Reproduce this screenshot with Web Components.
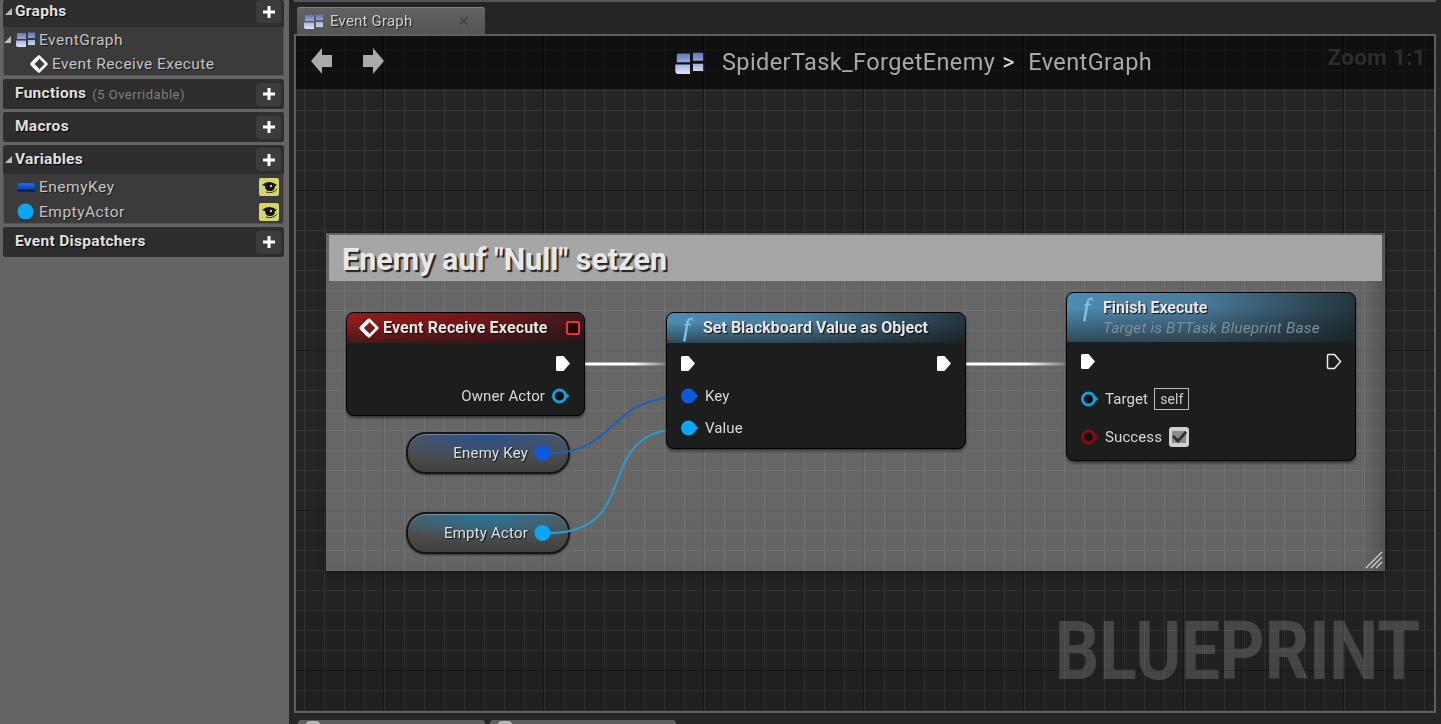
<!DOCTYPE html>
<html>
<head>
<meta charset="utf-8">
<title>Event Graph</title>
<style>
  html, body { margin: 0; height: 724px; overflow: hidden; background: #252525; }
  body { font-family: Roboto, "Liberation Sans", sans-serif; }
</style>
</head>
<body>

<ue-editor>
  <ue-sidebar slot="side">
    <ue-section title="Graphs" arrow style="--head: 27px; --pb: 4px">
      <ue-tree-row icon="graph" arrow>EventGraph</ue-tree-row>
      <ue-tree-row icon="event" indent style="height:24px;letter-spacing:.42px">Event Receive Execute</ue-tree-row>
    </ue-section>
    <ue-section title="Functions" note="(5 Overridable)"></ue-section>
    <ue-section title="Macros"></ue-section>
    <ue-section title="Variables" arrow style="--head: 29px">
      <ue-tree-row icon="key" eye>EnemyKey</ue-tree-row>
      <ue-tree-row icon="actor" eye>EmptyActor</ue-tree-row>
    </ue-section>
    <ue-section title="Event Dispatchers"></ue-section>
  </ue-sidebar>

  <ue-tab slot="tabs">Event Graph</ue-tab>

  <ue-graph slot="graph">
    <ue-comment style="left:30px;top:197px;width:1059px;height:338px">Enemy auf "Null" setzen</ue-comment>

    <ue-var-node color="#0b5ad9" style="left:110px;top:396px">Enemy Key</ue-var-node>
    <ue-var-node color="#0aa5f5" style="left:110px;top:476px">Empty Actor</ue-var-node>

    <ue-wires></ue-wires>

    <ue-node kind="event" title="Event Receive Execute" style="left:50px;top:276px;width:239px;height:104px;--title-ls:.15px">
      <ue-row><span></span><ue-pin type="exec"></ue-pin></ue-row>
      <ue-row><span></span><ue-pin type="hollow" color="#1a9ad6" side="out">Owner Actor</ue-pin></ue-row>
    </ue-node>

    <ue-node kind="func" title="Set Blackboard Value as Object" style="left:370px;top:276px;width:300px;height:137px">
      <ue-row><ue-pin type="exec"></ue-pin><ue-pin type="exec"></ue-pin></ue-row>
      <ue-row><ue-pin type="data" color="#0b5ad9">Key</ue-pin></ue-row>
      <ue-row><ue-pin type="data" color="#0aa5f5">Value</ue-pin></ue-row>
    </ue-node>

    <ue-node kind="func" title="Finish Execute" sub="Target is BTTask Blueprint Base" style="left:770px;top:256px;width:290px;height:169px">
      <ue-row><ue-pin type="exec"></ue-pin><ue-pin type="exec-open"></ue-pin></ue-row>
      <ue-row><ue-pin type="hollow" color="#1a9ad6">Target<ue-self>self</ue-self></ue-pin></ue-row>
      <ue-row><ue-pin type="hollow" color="#8c0a14">Success<ue-check></ue-check></ue-pin></ue-row>
    </ue-node>
  </ue-graph>

  <ue-bottom-tabs slot="bottom"></ue-bottom-tabs>
</ue-editor>

<script>
(function () {

  const GRAPH_ICON = (w, h) => `
    <svg width="${w}" height="${h}" viewBox="0 0 20 15" style="display:block">
      <defs><linearGradient id="g" x1="0" y1="0" x2="0" y2="1">
        <stop offset="0" stop-color="#5f75b4"/><stop offset="1" stop-color="#dfe7fb"/>
      </linearGradient></defs>
      <path fill="url(#g)" d="M1 2 Q1 1 2 1 H10 V7 H1 Z M12 0.5 H19 V6 H12 Z M0 8.5 H10 V15 H2 Q0 15 0 13 Z M12 8 H19 V13 H12 Z"/>
    </svg>`;

  const DIAMOND = (s) => `
    <svg width="${s}" height="${s}" viewBox="0 0 20 20" style="display:block">
      <path d="M10 2.5 L17.5 10 L10 17.5 L2.5 10 Z" fill="none" stroke="#eee" stroke-width="2.6" stroke-linejoin="round"/>
      <path d="M3 10 L9 4 M3 10 L9 16" stroke="#fff" stroke-width="3.4"/>
    </svg>`;

  class UeEditor extends HTMLElement {
    connectedCallback() {
      this.attachShadow({ mode: 'open' }).innerHTML = `
        <style>
          /* the reference is a slightly soft upscale */
          :host { display: grid; grid-template-columns: 289px 1fr; height: 724px; overflow: hidden; filter: blur(.5px); }
          .main { display: flex; flex-direction: column; min-width: 0; height: 724px; overflow: hidden; padding: 0 5px 0 5px; }
          .tabs { flex: none; height: 34px; box-sizing: border-box; border-top: 2px solid #555; display: flex; align-items: flex-end; padding-left: 3px; }
        </style>
        <slot name="side"></slot>
        <div class="main">
          <div class="tabs"><slot name="tabs"></slot></div>
          <slot name="graph"></slot>
          <slot name="bottom"></slot>
        </div>`;
    }
  }

  class UeSidebar extends HTMLElement {
    connectedCallback() {
      this.attachShadow({ mode: 'open' }).innerHTML = `
        <style>
          :host { display: flex; flex-direction: column; gap: 3px; background: #646464; padding: 0 5px 0 3px; height: 724px; box-sizing: border-box; }
        </style>
        <slot></slot>`;
    }
  }

  class UeSection extends HTMLElement {
    connectedCallback() {
      const title = this.getAttribute('title');
      const note = this.getAttribute('note');
      const arrow = this.hasAttribute('arrow');
      this.attachShadow({ mode: 'open' }).innerHTML = `
        <style>
          :host { display: block; flex: none; color: #dcdcdc; border-radius: 3px; overflow: hidden; background: #3b3b3b; box-shadow: 0 0 0 1px #555 inset; }
          .head { height: var(--head, 30px); background: #2e2e2e; display: flex; align-items: center; box-sizing: border-box; padding: 0 3px var(--pb, 0) 1px; }
          .tri { width: 11px; flex: none; }
          .tri svg { display: block; }
          b { font-size: 15.5px; font-weight: 700; letter-spacing: .3px; color: #e0e0e0; text-shadow: 1px 1px 1px #000; transform: translateY(-1px); }
          small { font-size: 13px; color: #808080; margin-left: 6px; letter-spacing: .5px; margin-top: 1px; }
          .plus { margin-left: auto; width: 25px; height: 23px; background: #3c3c3c; border-radius: 3px; display: flex; align-items: center; justify-content: center; }
        </style>
        <div class="head">
          <span class="tri">${arrow ? '<svg width="9" height="9"><path d="M8 1 V8 H1 Z" fill="#bbb"/></svg>' : ''}</span>
          <b>${title}</b>${note ? `<small>${note}</small>` : ''}
          <span class="plus"><svg width="14" height="14"><path d="M7 1 V13 M1 7 H13" stroke="#fff" stroke-width="3"/></svg></span>
        </div>
        ${this.children.length ? '<slot></slot>' : ''}`;
    }
  }

  class UeTreeRow extends HTMLElement {
    connectedCallback() {
      const icon = this.getAttribute('icon');
      const arrow = this.hasAttribute('arrow');
      const eye = this.hasAttribute('eye');
      const isEvent = icon === 'event';
      const icons = {
        graph: GRAPH_ICON(21, 15),
        event: DIAMOND(20),
        key: '<svg width="20" height="12"><rect x="1" y="2" width="18" height="8" rx="3.5" fill="#0d4fc0"/><rect x="2" y="2" width="16" height="3" rx="1.5" fill="#1c66e0"/><rect x="1" y="8" width="18" height="3" rx="1.5" fill="#0a2460"/></svg>',
        actor: '<svg width="20" height="20"><circle cx="10.5" cy="11" r="8.5" fill="#0b3a58"/><circle cx="9.5" cy="9.5" r="8" fill="#0da6f0"/></svg>'
      };
      this.attachShadow({ mode: 'open' }).innerHTML = `
        <style>
          :host { display: flex; align-items: center; height: 25px; font-size: 15.5px; color: #c4c4c4; letter-spacing: .5px; text-shadow: 1px 1px 0 #1a1a1a; padding-left: ${this.hasAttribute('indent') ? 25 : 1}px; }
          .tri { width: 12px; flex: none; display: ${this.hasAttribute('indent') ? 'none' : 'block'}; }
          .tri svg { display: block; }
          .icon { flex: none; margin-right: ${isEvent ? 2 : 3}px; width: ${isEvent ? 22 : 20}px; display: flex; align-items: center; justify-content: center; }
          .eye { margin: 0 5px 0 auto; width: 20px; height: 18px; background: #d5d56c; border-radius: 2px; display: flex; align-items: center; justify-content: center; }
        </style>
        <span class="tri">${arrow ? '<svg width="9" height="9"><path d="M7 1 V8 H0 Z" fill="#bbb"/></svg>' : ''}</span>
        <span class="icon">${icons[icon]}</span>
        <slot></slot>
        ${eye ? `<span class="eye"><svg width="17" height="12" viewBox="0 0 17 12"><path d="M1 4 Q8 -2 16 4 L14 5 Q14 10 9 10 Q4 10 4 5 Z" fill="#111"/><path d="M5 11 Q12 13 16 8" stroke="#333" fill="none"/><circle cx="10" cy="5" r="1.2" fill="#d5d56c"/></svg></span>` : ''}`;
    }
  }

  class UeTab extends HTMLElement {
    connectedCallback() {
      this.attachShadow({ mode: 'open' }).innerHTML = `
        <style>
          :host { display: flex; align-items: center; width: 188px; height: 27px; box-sizing: border-box; background: linear-gradient(#626262, #555); border-top: 1px solid #8f8a3c; border-radius: 3px 3px 0 0; padding: 0 8px 0 7px; color: #d0d0d0; font-size: 15px; letter-spacing: .2px; text-shadow: 1px 1px 1px #111; }
          .icon { margin-right: 6px; }
          .x { margin-left: auto; margin-right: 7px; color: #3f3f3f; font-size: 14px; text-shadow: none; }
        </style>
        <span class="icon">${GRAPH_ICON(20, 15)}</span><slot></slot><span class="x">&#x2715;</span>`;
    }
  }

  class UeGraph extends HTMLElement {
    connectedCallback() {
      this.attachShadow({ mode: 'open' }).innerHTML = `
        <style>
          :host { display: block; position: relative; flex: none; height: 679px; box-sizing: border-box; border: 2px solid #5f5f5f; overflow: hidden;
            background-color: #252525;
            background-image:
              linear-gradient(90deg, #191919 1px, transparent 1px),
              linear-gradient(#191919 1px, transparent 1px),
              linear-gradient(90deg, #363636 1px, transparent 1px),
              linear-gradient(#343434 1px, transparent 1px);
            background-size: 160px 160px, 160px 160px, 20px 20px, 20px 20px;
            background-position: 87px 0, 0 154px, 8px 0, 0 14px;
          }
          .bar { position: absolute; left: 0; right: 0; top: 0; height: 53px; background: rgba(0,0,0,.58); display: flex; align-items: center; z-index: 5; }
          .arrows { position: absolute; left: 15px; top: 10px; display: flex; gap: 29px; }
          .crumb { position: absolute; left: 379px; top: 0; height: 51px; display: flex; align-items: center; font-size: 23.5px; color: #a9a9a9; letter-spacing: .4px; }
          .crumb .i { margin-right: 17px; margin-top: 2px; }
          .crumb .sep { width: 33px; box-sizing: border-box; padding-left: 7px; }
          .zoom { position: absolute; right: 8px; top: 8px; font-size: 22.5px; font-weight: 700; color: #2d2d2d; letter-spacing: .3px; }
          .mark { position: absolute; right: 14px; bottom: 19px; font-size: 81px; line-height: 81px; font-weight: 700; color: rgba(255,255,255,.17); transform: scaleX(.855); transform-origin: right center; z-index: 0; }
          .fade { position: absolute; inset: 0; background: linear-gradient(transparent 60%, rgba(0,0,0,.15)); pointer-events: none; }
        </style>
        <div class="fade"></div>
        <div class="mark">BLUEPRINT</div>
        <slot></slot>
        <div class="bar">
          <div class="arrows">
            <svg width="22" height="30" viewBox="0 0 22 30"><path d="M0 15 L11 2 V9 H21 V21 H11 V28 Z" fill="#aaa"/></svg>
            <svg width="22" height="30" viewBox="0 0 22 30"><path d="M22 15 L11 2 V9 H1 V21 H11 V28 Z" fill="#aaa"/></svg>
          </div>
          <div class="crumb">
            <span class="i">${GRAPH_ICON(30, 22)}</span>
            <span>SpiderTask_ForgetEnemy</span>
            <span class="sep" style="color:#ddd">&gt;</span>
            <span>EventGraph</span>
          </div>
          <div class="zoom">Zoom 1:1</div>
        </div>`;
    }
  }

  class UeComment extends HTMLElement {
    connectedCallback() {
      this.attachShadow({ mode: 'open' }).innerHTML = `
        <style>
          :host { display: block; position: absolute; box-sizing: border-box; padding: 2px 3px 3px; background: rgba(255,255,255,.3); box-shadow: 0 1px 6px rgba(0,0,0,.5), inset -18px -4px 18px -10px rgba(0,0,0,.22); }
          .title { height: 46px; margin-right: 0; background: #a6a6a6; display: flex; align-items: center; padding: 2px 0 0 13px; box-sizing: border-box; font-size: 30.5px; font-weight: 700; color: #e8e8e8; text-shadow: 2px 2px 1px #222; }
          svg { position: absolute; right: 2px; bottom: 2px; }
        </style>
        <div class="title"><slot></slot></div>
        <svg width="18" height="18"><path d="M1 17 L17 1 M6 17 L17 6 M11 17 L17 11" stroke="#ccc" stroke-width="1.4"/></svg>`;
    }
  }

  class UeWires extends HTMLElement {
    connectedCallback() {
      this.attachShadow({ mode: 'open' }).innerHTML = `
        <style>
          :host { display: block; position: absolute; inset: 0; pointer-events: none; }
          svg { position: absolute; left: 0; top: 0; }
        </style>
        <svg width="1140" height="680" fill="none">
          <defs>
            <linearGradient id="w1" gradientUnits="userSpaceOnUse" x1="285" y1="0" x2="372" y2="0"><stop offset=".6" stop-color="#fff"/><stop offset="1" stop-color="#777"/></linearGradient>
            <linearGradient id="w2" gradientUnits="userSpaceOnUse" x1="665" y1="0" x2="772" y2="0"><stop offset=".6" stop-color="#fff"/><stop offset="1" stop-color="#777"/></linearGradient>
          </defs>
          <path d="M285 328 H372" stroke="url(#w1)" stroke-width="3"/>
          <path d="M665 328 H772" stroke="url(#w2)" stroke-width="3"/>
          <path d="M253 417 C324 417 309 361 387 361" stroke="#1f60bb" stroke-width="2"/>
          <path d="M253 497 C349 497 294 393 387 393" stroke="#2c9bd0" stroke-width="2"/>
        </svg>`;
    }
  }

  class UeNode extends HTMLElement {
    connectedCallback() {
      const kind = this.getAttribute('kind');
      const title = this.getAttribute('title');
      const sub = this.getAttribute('sub');
      const isEvent = kind === 'event';
      this.attachShadow({ mode: 'open' }).innerHTML = `
        <style>
          :host { display: flex; flex-direction: column; position: absolute; box-sizing: border-box; background: #1c1d1d; border: 1px solid #000; border-radius: 8px; overflow: hidden; box-shadow: 0 2px 3px rgba(0,0,0,.5); color: #dcdcdc; font-size: 15px; z-index: 2; }
          .head { flex: none; position: relative; display: flex; align-items: center; box-sizing: border-box; height: ${sub ? 49 : 30}px; padding: 0 11px ${sub ? 0 : 1}px; }
          .head::after { content: ''; position: absolute; inset: 0; background: linear-gradient(rgba(0,0,0,0) 30%, rgba(20,20,20,.55)); }
          .head.event { background: linear-gradient(90deg, #8e1c1e, #701618 55%, #3a1a1a); }
          .head.func { background: linear-gradient(90deg, #4f8bb0, #4a7c9c 45%, #24343e); }
          .head > * { position: relative; z-index: 1; }
          .ic { width: 22px; flex: none; margin-right: 3px; align-self: ${sub ? 'flex-start' : 'center'}; }
          .f { font-family: "Liberation Serif", serif; font-style: italic; font-weight: 400; font-size: 25px; line-height: 29px; color: #7cc4ee; -webkit-text-stroke: .4px #7cc4ee; padding-left: 5px; display: block; }
          .t b { display: block; font-size: 16px; font-weight: 700; letter-spacing: var(--title-ls, 0); color: #e6e6e6; text-shadow: 1px 1px 1px #111; }
          .t i { display: block; font-size: 15.5px; color: #7d8e96; margin-top: 2px; letter-spacing: .15px; }
          .stop { margin-left: auto; width: 14px; height: 14px; box-sizing: border-box; border: 2px solid #e8323a; border-radius: 2px; background: #200; margin-right: -7px; }
          .body { padding-top: ${sub ? 1 : 4}px; --row: ${sub ? '37.5px' : '32.5px'}; }
        </style>
        <div class="head ${kind}">
          <span class="ic">${isEvent ? DIAMOND(22) : '<span class="f">f</span>'}</span>
          <span class="t"><b>${title}</b>${sub ? `<i>${sub}</i>` : ''}</span>
          ${isEvent ? '<span class="stop"></span>' : ''}
        </div>
        <div class="body"><slot></slot></div>`;
    }
  }

  class UeRow extends HTMLElement {
    connectedCallback() {
      this.attachShadow({ mode: 'open' }).innerHTML = `
        <style>
          :host { display: flex; align-items: center; justify-content: space-between; height: var(--row, 32px); padding: 0 13px; }
        </style>
        <slot></slot>`;
    }
  }

  class UePin extends HTMLElement {
    connectedCallback() {
      const type = this.getAttribute('type');
      const color = this.getAttribute('color');
      const out = this.getAttribute('side') === 'out';
      let svg = '';
      if (type === 'exec') {
        svg = '<svg width="16" height="17"><path d="M2.5 1 H8.5 L15 8.5 L8.5 16 H2.5 Q1 16 1 14.5 V2.5 Q1 1 2.5 1 Z" fill="#fff"/></svg>';
      } else if (type === 'exec-open') {
        svg = '<svg width="16" height="17"><path d="M2.5 1.5 H8.5 L14.5 8.5 L8.5 15.5 H2.5 Q1.5 15.5 1.5 14.5 V2.5 Q1.5 1.5 2.5 1.5 Z" fill="none" stroke="#eee" stroke-width="1.5"/></svg>';
      } else if (type === 'data') {
        svg = `<svg width="19" height="16"><path d="M15 5 L18.5 8 L15 11 Z" fill="${color}"/><circle cx="8.5" cy="8" r="7.5" fill="${color}"/></svg>`;
      } else {
        svg = `<svg width="19" height="16"><path d="M15 5 L18.5 8 L15 11 Z" fill="${color}"/><circle cx="8.5" cy="8" r="6" fill="#111" stroke="${color}" stroke-width="3"/></svg>`;
      }
      this.attachShadow({ mode: 'open' }).innerHTML = `
        <style>
          :host { display: inline-flex; align-items: center; gap: 6px; color: #d8d8d8; font-size: 15px; letter-spacing: .1px; ${out ? 'margin-right: 1px;' : ''} }
          svg { display: block; flex: none; }
        </style>
        ${out ? '<slot></slot>' + svg : svg + (this.childNodes.length ? '<slot></slot>' : '')}`;
    }
  }

  class UeSelf extends HTMLElement {
    connectedCallback() {
      this.attachShadow({ mode: 'open' }).innerHTML = `
        <style>
          :host { display: block; border: 1px solid #bbb; padding: 1px 5px; font-size: 14px; color: #ccc; line-height: 18px; }
        </style>
        <slot></slot>`;
    }
  }

  class UeCheck extends HTMLElement {
    connectedCallback() {
      this.attachShadow({ mode: 'open' }).innerHTML = `
        <style>
          :host { display: block; margin-left: 1px; width: 20px; height: 20px; background: #cfcfcf; border-radius: 3px; }
          svg { display: block; }
        </style>
        <svg width="20" height="20"><path d="M3 4 H17 V16 H3 Z" fill="#8d8d8d"/><path d="M4 9 L9 14 L17 5" fill="none" stroke="#333" stroke-width="3"/></svg>`;
    }
  }

  class UeVarNode extends HTMLElement {
    connectedCallback() {
      const color = this.getAttribute('color');
      this.attachShadow({ mode: 'open' }).innerHTML = `
        <style>
          :host { display: flex; align-items: center; justify-content: flex-end; gap: 6px; position: absolute; width: 164px; height: 42px; box-sizing: border-box; padding-right: 15px; border: 2px solid #141414; border-radius: 20px; color: #e0e0e0; font-size: 15px; letter-spacing: .2px; text-shadow: 1px 1px 1px #111;
            background: radial-gradient(ellipse 70% 75% at 50% 0, color-mix(in srgb, ${color} 50%, #444), transparent), linear-gradient(#5a5a5a, #404040); box-shadow: 0 1px 2px rgba(0,0,0,.5), inset 0 1px 0 rgba(255,255,255,.3); }
          svg { display: block; }
        </style>
        <slot></slot>
        <svg width="19" height="16"><path d="M15 5 L18.5 8 L15 11 Z" fill="${color}"/><circle cx="8.5" cy="8" r="8" fill="${color}"/></svg>`;
    }
  }

  class UeBottomTabs extends HTMLElement {
    connectedCallback() {
      this.attachShadow({ mode: 'open' }).innerHTML = `
        <style>
          :host { display: flex; gap: 5px; padding: 7px 0 0 4px; height: 12px; }
          span { display: block; position: relative; height: 8px; background: #5f5f5f; border-radius: 3px 3px 0 0; }
          span::after { content: ''; position: absolute; left: 8px; top: 1px; width: 14px; height: 4px; border-radius: 7px 7px 0 0; background: #b8b8b8; }
        </style>
        <span style="width:187px"></span><span style="width:186px"></span>`;
    }
  }

  customElements.define('ue-editor', UeEditor);
  customElements.define('ue-sidebar', UeSidebar);
  customElements.define('ue-section', UeSection);
  customElements.define('ue-tree-row', UeTreeRow);
  customElements.define('ue-tab', UeTab);
  customElements.define('ue-graph', UeGraph);
  customElements.define('ue-comment', UeComment);
  customElements.define('ue-wires', UeWires);
  customElements.define('ue-node', UeNode);
  customElements.define('ue-row', UeRow);
  customElements.define('ue-pin', UePin);
  customElements.define('ue-self', UeSelf);
  customElements.define('ue-check', UeCheck);
  customElements.define('ue-var-node', UeVarNode);
  customElements.define('ue-bottom-tabs', UeBottomTabs);
})();
</script>
</body>
</html>
